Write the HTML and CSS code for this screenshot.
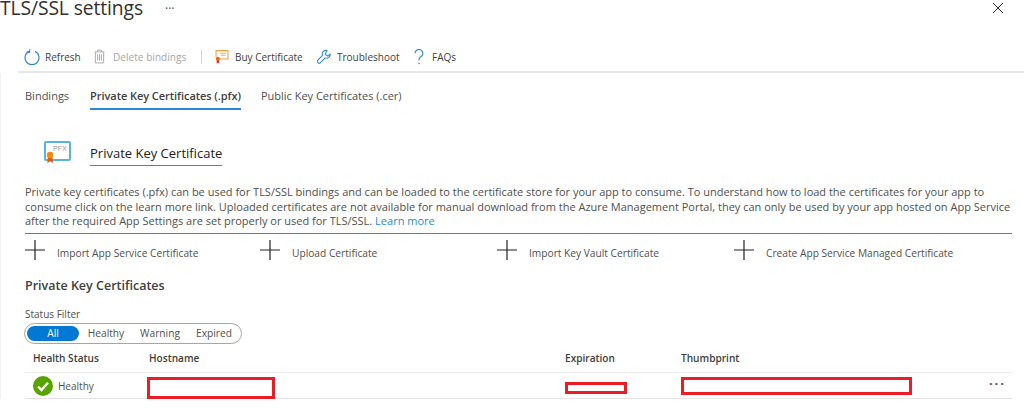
FILE: index.html
```html
<!DOCTYPE html>
<html lang="en">
<head>
<meta charset="utf-8">
<title>TLS/SSL settings</title>
<link rel="stylesheet" href="styles.css">
</head>
<body>
<header class="title-bar">
  <h1 class="title">TLS/SSL settings</h1>
  <span class="title-more">···</span>
  <svg class="close" viewBox="0 0 10 10" width="10" height="10"><path d="M0 0L10 10M10 0L0 10" stroke="#333" stroke-width="1" fill="none"/></svg>
</header>
<nav class="toolbar">
  <button class="tool tool-refresh">
    <svg width="16" height="16" viewBox="0 0 16 16" fill="none"><path d="M5 2.400A7 7 0 1 0 11 2.400" stroke="#2b88d8" stroke-width="1.200"/><path d="M5.500 0.200V3.200H2.600" stroke="#2b88d8" stroke-width="1.200" transform="rotate(8 5 3)"/></svg>
    <span>Refresh</span>
  </button>
  <button class="tool tool-off">
    <svg width="11" height="15" viewBox="0 0 12 15" fill="none" stroke="#a6a6a6"><path d="M.5 2.500h11M4 2.500V.5h4v2M1.500 2.500v12h9v-12M4 5v7M6 5v7M8 5v7"/></svg>
    <span>Delete bindings</span>
  </button>
  <span class="tool-sep"></span>
  <button class="tool tool-buy">
    <svg width="14" height="14" viewBox="0 0 15 16" fill="none"><path d="M1.500 .7h12.800v9.600H5" stroke="#e8a33d" stroke-width="1.200"/><path d="M.7 8V.7h1" stroke="#e8a33d" stroke-width="1.200"/><path d="M5 3.700h7M6.500 6h5" stroke="#e8a33d"/><path d="M1.600 11l-.4 4.500 1.600-1 1.500 1-.3-4.500z" fill="#d13438"/><circle cx="2.800" cy="10" r="2.400" fill="#f7630c"/></svg>
    <span>Buy Certificate</span>
  </button>
  <button class="tool tool-fix">
    <svg width="14" height="15" viewBox="0 0 15 15" fill="none"><path d="M9.500.8a4 4 0 0 0-3.600 5.400L.9 11.300a1.900 1.900 0 0 0 2.800 2.800l5-5.100A4 4 0 0 0 14.200 4.800L11.500 7 8.800 5.200 10.700 1z" stroke="#2b88d8" stroke-width="1.100" stroke-linejoin="round"/></svg>
    <span>Troubleshoot</span>
  </button>
  <button class="tool tool-faq">
    <svg width="10" height="16" viewBox="0 0 10 16" fill="none"><path d="M1 4.300A3.900 3.900 0 1 1 6.800 7.800C5.500 8.600 5 9.300 5 10.800V11.500" stroke="#2b88d8" stroke-width="1.100"/><circle cx="5" cy="14.500" r=".8" fill="#2b88d8"/></svg>
    <span>FAQs</span>
  </button>
</nav>
<main class="content">
  <div class="tabs">
    <span class="tab">Bindings</span>
    <span class="tab tab-active">Private Key Certificates (.pfx)</span>
    <span class="tab">Public Key Certificates (.cer)</span>
  </div>
  <section class="intro">
    <div class="intro-head">
      <svg class="pfx-icon" width="27" height="23" viewBox="0 0 27 23">
        <rect x="1" y="1" width="25" height="18" rx="1" fill="#fff" stroke="#59b4d9" stroke-width="2"/>
        <text x="9" y="10" class="pfx-text">PFX</text>
        <path d="M4 15l-.7 7 3-1.800 2.700 1.800-.7-7z" fill="#e25b0b"/>
        <circle cx="6" cy="14" r="3.200" fill="#f7860f"/>
      </svg>
      <h2 class="intro-title">Private Key Certificate</h2>
    </div>
    <p class="intro-text">Private key certificates (.pfx) can be used for TLS/SSL bindings and can be loaded to the certificate store for your app to consume. To understand how to load the certificates for your app to<br>consume click on the learn more link. Uploaded certificates are not available for manual download from the Azure Management Portal, they can only be used by your app hosted on App Service<br>after the required App Settings are set properly or used for TLS/SSL. <a class="link" href="#">Learn more</a></p>
  </section>
  <div class="actions">
    <div class="action"><svg class="plus" width="20" height="20" viewBox="0 0 20 20"><path d="M0 10H20M10 0V20" stroke="#222" stroke-width="1.200"/></svg><span>Import App Service Certificate</span></div>
    <div class="action"><svg class="plus" width="20" height="20" viewBox="0 0 20 20"><path d="M0 10H20M10 0V20" stroke="#222" stroke-width="1.200"/></svg><span>Upload Certificate</span></div>
    <div class="action"><svg class="plus" width="20" height="20" viewBox="0 0 20 20"><path d="M0 10H20M10 0V20" stroke="#222" stroke-width="1.200"/></svg><span>Import Key Vault Certificate</span></div>
    <div class="action"><svg class="plus" width="20" height="20" viewBox="0 0 20 20"><path d="M0 10H20M10 0V20" stroke="#222" stroke-width="1.200"/></svg><span>Create App Service Managed Certificate</span></div>
  </div>
  <h3 class="list-title">Private Key Certificates</h3>
  <div class="filter-label">Status Filter</div>
  <div class="pill-group">
    <span class="pill pill-on">All</span>
    <span class="pill">Healthy</span>
    <span class="pill">Warning</span>
    <span class="pill">Expired</span>
  </div>
  <div class="grid grid-head">
    <span>Health Status</span>
    <span>Hostname</span>
    <span>Expiration</span>
    <span>Thumbprint</span>
    <span></span>
  </div>
  <div class="grid grid-row">
    <span class="status">
      <svg width="20" height="20" viewBox="0 0 20 20"><circle cx="10" cy="10" r="10" fill="#57a300"/><path d="M5 10.500L8.500 14 15 6.800" fill="none" stroke="#fff" stroke-width="2.400"/></svg>
      Healthy
    </span>
    <span class="redact redact-host"></span>
    <span class="redact redact-exp"></span>
    <span class="redact redact-thumb"></span>
    <span class="row-more">···</span>
  </div>
</main>
</body>
</html>
```
FILE: styles.css
```css
* { box-sizing: border-box; }
html, body { margin: 0; padding: 0; }
body {
  width: 1024px;
  height: 413px;
  overflow: hidden;
  background: #fff;
  color: #323130;
  font-family: "Open Sans", "Noto Sans", "Liberation Sans", sans-serif;
}
.title-bar {
  height: 46px;
  display: flex;
  align-items: flex-start;
}
.title {
  margin: 0;
  font-size: 19.300px;
  line-height: 16px;
  font-weight: 400;
  letter-spacing: -0.1px;
}
.title-more { margin: -1px 0 0 22px; font-size: 12px; line-height: 20px; color: #444; }
.close { margin: 3px 21px 0 auto; }
.toolbar {
  margin-left: 18px;
  height: 27px;
  padding: 0 0 4px 6px;
  border-bottom: 2px solid #e8e8e8;
  display: flex;
  align-items: center;
}
.tool {
  display: flex;
  align-items: center;
  gap: 5px;
  padding: 0;
  border: 0;
  background: none;
  font: inherit;
  font-size: 10px;
  color: #404040;
}
.tool-refresh { width: 70px; }
.tool-off { width: 107px; gap: 8px; letter-spacing: 0.05px; color: #a6a6a6; }
.tool-sep { width: 1px; height: 14px; background: #d4d4d4; margin-right: 13px; }
.tool-buy { width: 102px; gap: 6px; }
.tool-fix { width: 97px; gap: 6px; }
.tool-faq { gap: 8px; }
.content {
  padding: 0 12px 0 24px;
  border-left: 1px solid #f2f2f2;
}
.tabs { display: flex; gap: 21px; height: 37px; align-items: stretch; }
.tab {
  font-size: 11px;
  line-height: 14px;
  padding-top: 16px;
  color: #505050;
}
.tab-active {
  margin-right: -1px;
  font-weight: 600;
  letter-spacing: -0.06px;
  color: #404040;
  border-bottom: 2px solid #2b88d8;
  height: 37px;
}
.intro-head { display: flex; align-items: flex-start; padding: 31px 0 0 19px; gap: 19px; height: 75px; }
.pfx-text { font: 7px "Liberation Sans", sans-serif; fill: #999; }
.intro-title {
  margin: 3px 0 0;
  font-size: 13px;
  line-height: 19px;
  height: 22px;
  font-weight: 500;
  border-bottom: 1px solid #777;
  color: #222;
}
.intro-text {
  margin: 0;
  font-size: 11px;
  line-height: 14.600px;
  color: #505050;
  white-space: nowrap;
  padding-bottom: 4px;
  border-bottom: 1px solid #777;
  height: 49px;
}
.link { color: #2b88d8; text-decoration: none; }
.actions { display: flex; height: 40px; padding-top: 6px; align-items: flex-start; }
.action { display: flex; align-items: center; gap: 12px; font-size: 10.200px; color: #505050; }
.action span { padding-top: 5px; }
.action:nth-child(1) { width: 235px; }
.action:nth-child(2) { width: 237px; }
.action:nth-child(3) { width: 237px; }
.list-title { margin: 0; height: 32px; font-size: 12.500px; line-height: 24px; font-weight: 600; color: #404040; }
.filter-label { font-size: 10px; line-height: 14px; height: 17px; color: #505050; padding-top: 1px; }
.pill-group {
  width: 218px;
  height: 21px;
  margin-left: -1px;
  border: 1px solid #a6a6a6;
  border-radius: 11px;
  padding: 2px 0 2px 2px;
  display: flex;
  align-items: center;
  font-size: 10.200px;
  color: #505050;
}
.pill { text-align: center; line-height: 15px; width: 54px; }
.pill-on { width: 52px; background: #0078d4; color: #fff; border-radius: 8px; }
.grid { display: grid; grid-template-columns: 116px 416px 116px 1fr auto; padding-left: 8px; }
.grid-head {
  height: 29px;
  align-items: center;
  font-size: 10.100px;
  font-weight: 600;
  color: #404040;
  border-bottom: 1px solid #ececec;
}
.grid-row { height: 26px; border-bottom: 1px solid #e4e4e4; font-size: 10px; color: #505050; }
.status { display: flex; align-items: center; gap: 5px; height: 25px; }
.redact { display: block; background: #fff; border: 3px solid #ed1c24; }
.redact-host { width: 128px; height: 22px; margin: 4px 0 0 -2px; }
.redact-exp { width: 62px; height: 12px; margin-top: 9px; }
.redact-thumb { width: 231px; height: 18px; margin-top: 4px; }
.row-more { font-size: 13px; line-height: 20px; font-weight: 700; letter-spacing: 2px; margin-right: 6px; color: #555; }
```
